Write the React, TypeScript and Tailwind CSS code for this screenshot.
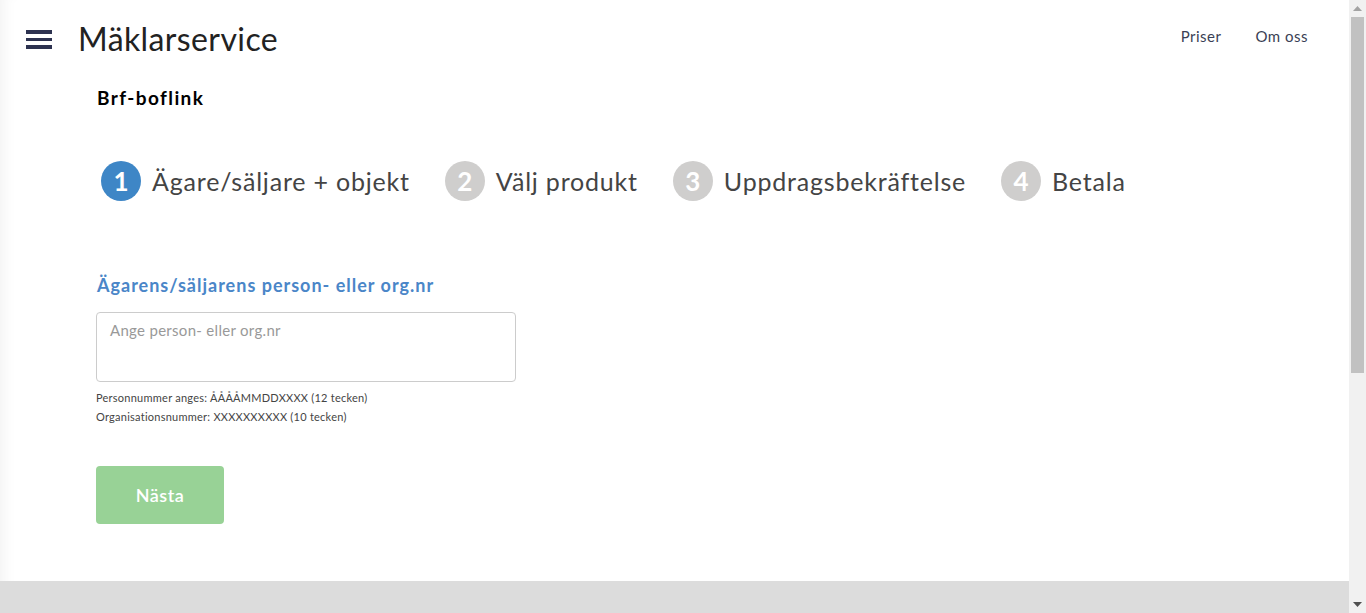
import React from 'react';

const steps = [
  { n: 1, label: 'Ägare/säljare + objekt', active: true },
  { n: 2, label: 'Välj produkt', active: false },
  { n: 3, label: 'Uppdragsbekräftelse', active: false },
  { n: 4, label: 'Betala', active: false },
];

function Hamburger() {
  return (
    <div className="flex h-[19px] w-[26px] flex-col justify-between">
      <span className="block h-[4px] w-full bg-[#2d3250]" />
      <span className="block h-[3px] w-full bg-[#2d3250]" />
      <span className="block h-[4px] w-full bg-[#2d3250]" />
    </div>
  );
}

function Scrollbar() {
  return (
    <div className="flex h-full w-[17px] flex-col bg-[#f1f1f1]">
      <div className="flex h-[17px] items-center justify-center">
        <svg width="9" height="5" viewBox="0 0 9 5">
          <path d="M0 5 L4.5 0 L9 5 Z" fill="#a3a3a3" />
        </svg>
      </div>
      <div className="mx-[2px] h-[356px] bg-[#c1c1c1]" />
      <div className="flex-1" />
      <div className="flex h-[17px] items-center justify-center">
        <svg width="9" height="5" viewBox="0 0 9 5">
          <path d="M0 0 L9 0 L4.5 5 Z" fill="#505050" />
        </svg>
      </div>
    </div>
  );
}

export default function App() {
  return (
    <div
      className="flex h-[613px] w-full overflow-hidden bg-white"
      style={{ fontFamily: 'Lato, "Open Sans", sans-serif' }}
    >
      <div className="flex h-full flex-1 flex-col shadow-[inset_14px_0_14px_-10px_rgba(0,0,0,0.05)]">
        {/* Header */}
        <header className="flex items-start justify-between pl-[26px] pr-[41px] pt-[22px]">
          <div className="flex items-center">
            <Hamburger />
            <h1 className="ml-[26px] text-[32px] font-normal leading-[34px] tracking-[0.4px] text-[#222]">
              Mäklarservice
            </h1>
          </div>
          <nav className="mt-[3px] flex gap-[34px] text-[15px] tracking-[0.5px] text-[#3a3f55]">
            <a>Priser</a>
            <a>Om oss</a>
          </nav>
        </header>

        {/* Content */}
        <main className="pl-[96px]">
          <h2 className="ml-px mt-[31px] text-[19px] font-bold leading-[22px] tracking-[1.4px] text-black">
            Brf-boflink
          </h2>

          <ol className="mt-[52px] flex items-center gap-[35px] pl-[5px]">
            {steps.map((s) => (
              <li key={s.n} className="flex items-center gap-[11px]">
                <span
                  className={`flex h-[40px] w-[40px] items-center justify-center rounded-full text-[26px] font-bold text-white ${
                    s.active ? 'bg-[#3e86c6]' : 'bg-[#cfcecd]'
                  }`}
                >
                  {s.n}
                </span>
                <span className="text-[25px] leading-[30px] tracking-[0.8px] text-[#444]">
                  {s.label}
                </span>
              </li>
            ))}
          </ol>

          <label className="ml-px mt-[73px] block text-[18px] font-bold leading-[22px] tracking-[1px] text-[#4a86c8]">
            Ägarens/säljarens person- eller org.nr
          </label>

          <textarea
            placeholder="Ange person- eller org.nr"
            className="mt-[16px] block h-[70px] w-[420px] resize-none rounded-[4px] border border-[#cccccc] px-[13px] py-[6px] text-[15px] tracking-[0.3px] text-[#444] outline-none placeholder:text-[#999]"
          />

          <div className="mt-[6px] text-[11px] leading-[19px] tracking-[0.25px] text-[#444]">
            <p>Personnummer anges: ÅÅÅÅMMDDXXXX (12 tecken)</p>
            <p>Organisationsnummer: XXXXXXXXXX (10 tecken)</p>
          </div>

          <button className="mt-[40px] flex h-[58px] w-[128px] items-center justify-center rounded-[4px] bg-[#98d296] text-[18px] font-semibold tracking-[0.5px] text-white">
            Nästa
          </button>
        </main>

        <footer className="mt-auto h-[32px] bg-[#dcdcdc]" />
      </div>
      <Scrollbar />
    </div>
  );
}
